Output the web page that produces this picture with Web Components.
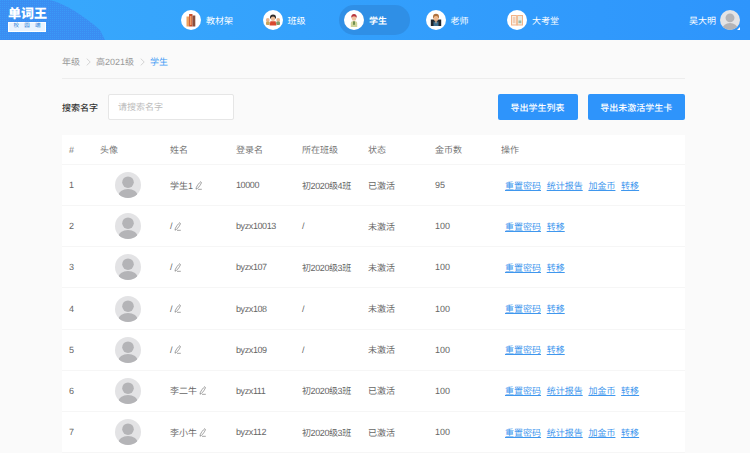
<!DOCTYPE html>
<html lang="zh">
<head>
<meta charset="utf-8">
<title>学生</title>
<style>
    html, body { margin: 0; padding: 0; }
    body {
        width: 750px;
        height: 453px;
        overflow: hidden;
        background: #fafafa;
        font-family: "Liberation Sans", "Noto Sans CJK SC", sans-serif;
        text-rendering: geometricPrecision;
    }
</style>
</head>
<body>
<top-bar></top-bar>
<page-main></page-main>

<script>
const AVATAR = `
    <svg viewBox="0 0 26 26" width="26" height="26">
        <defs><clipPath id="c"><circle cx="13" cy="13" r="13"/></clipPath></defs>
        <circle cx="13" cy="13" r="13" fill="#e3e3e5"/>
        <g clip-path="url(#c)" fill="#b4b4b7">
            <circle cx="13" cy="10.2" r="5.8"/>
            <ellipse cx="13" cy="24" rx="9.8" ry="7"/>
        </g>
    </svg>`;

const NAV_ICONS = {
    book: `<svg viewBox="0 0 20 20" width="20" height="20">
        <circle cx="10" cy="10" r="10" fill="#fff"/>
        <rect x="5.5" y="6.5" width="2.6" height="10" fill="#eda15f"/>
        <rect x="8.1" y="4" width="3.4" height="12.5" fill="#c9502d"/>
        <rect x="11.5" y="5.5" width="2.8" height="11" fill="#8a4f3c"/>
        <rect x="9.2" y="6" width="1.2" height="9" fill="#f3b27a"/>
    </svg>`,
    cls: `<svg viewBox="0 0 20 20" width="20" height="20">
        <circle cx="10" cy="10" r="10" fill="#fff"/>
        <circle cx="4.8" cy="10" r="1.9" fill="#e9b48c"/><rect x="3" y="11.5" width="3.8" height="3.5" rx="1" fill="#c9a45c"/>
        <circle cx="15.2" cy="10" r="1.9" fill="#e9b48c"/><rect x="13.2" y="11.5" width="3.8" height="3.5" rx="1" fill="#7f9a6a"/>
        <path d="M7 7.5a3 3 0 0 1 6 0v1H7z" fill="#2f2b2a"/>
        <circle cx="10" cy="8.7" r="2.2" fill="#f0bf9a"/>
        <path d="M6.6 15.5 7.4 11.2h5.2l.8 4.3z" fill="#d9482f"/>
    </svg>`,
    student: `<svg viewBox="0 0 20 20" width="20" height="20">
        <circle cx="10" cy="10" r="10" fill="#fff"/>
        <path d="M7.2 7.5a2.8 3.6 0 0 1 5.6 0z" fill="#b8373d"/>
        <circle cx="10" cy="8.5" r="2.3" fill="#f0c3a0"/>
        <path d="M6.8 17V13q0-1.7 1.7-1.7h3q1.700 0 1.700 1.700v4z" fill="#cfd49a"/>
        <rect x="9" y="11.3" width="2" height="3.5" fill="#6f8f50"/>
    </svg>`,
    teacher: `<svg viewBox="0 0 20 20" width="20" height="20">
        <circle cx="10" cy="10" r="10" fill="#fff"/>
        <rect x="4.8" y="9.5" width="10.4" height="6.5" fill="#20262c"/>
        <path d="M7 6.8a3 3 0 0 1 6 0v1.5H7z" fill="#b0703c"/>
        <circle cx="10" cy="8.4" r="2.5" fill="#eeb98f"/>
        <path d="M7.5 16V11.6h5V16z" fill="#3f6f8f"/>
        <path d="M9 11.3h2l-1 2.4z" fill="#eeb98f"/>
    </svg>`,
    exam: `<svg viewBox="0 0 20 20" width="20" height="20">
        <circle cx="10" cy="10" r="10" fill="#fff"/>
        <path d="M4 5h5.500l.5.6.5-.6H16v10.500h-5.500l-.5.6-.5-.6H4z" fill="#f2b48a"/>
        <rect x="5" y="6" width="4.200" height="8.500" fill="#fbeee2"/>
        <rect x="10.800" y="6" width="4.200" height="8.500" fill="#ecebe0"/>
        <path d="M5.800 8h2.600M5.800 10h2.600M5.800 12h2.600" stroke="#e39a6c" stroke-width=".7"/>
        <rect x="11.500" y="10.500" width="2.800" height="2.600" fill="#9fb8a0"/>
    </svg>`
};

class TopBar extends HTMLElement {
    constructor() {
        super();
        const items = [
            ["book", "教材架"], ["cls", "班级"], ["student", "学生", true],
            ["teacher", "老师"], ["exam", "大考堂"]
        ];
        this.attachShadow({mode: "open"}).innerHTML = `
        <style>
            :host {
                display: flex;
                align-items: center;
                height: 40px;
                position: relative;
                overflow: hidden;
                color: #fff;
                background: linear-gradient(90deg, #38a9fc, #2e95fc);
            }
            .blob { position: absolute; left: 0; top: 0; }
            .logo {
                position: absolute;
                left: 8px;
                top: 7px;
                width: 38px;
                line-height: 1;
                text-align: center;
            }
            .big {
                display: block;
                font-size: 13px;
                font-weight: 900;
                height: 14px;
                white-space: nowrap;
            }
            .small {
                display: flex;
                justify-content: space-around;
                align-items: center;
                height: 8px;
                margin-top: 1px;
                background: #e9f4ff;
                border: 0.5px solid #fff;
                color: #2680d8;
                font-size: 5.5px;
                padding: 0 2px;
            }
            nav {
                display: flex;
                align-items: center;
                margin-left: 181px;
            }
            .item {
                display: flex;
                align-items: center;
                gap: 5px;
                box-sizing: border-box;
                width: 81.5px;
                height: 30px;
                border-radius: 15px;
                font-size: 9px;
                white-space: nowrap;
            }
            .item svg { display: block; }
            .on {
                background: #2f8fe6;
                width: 71px;
                padding-left: 5px;
                margin: 0 15.5px 0 -5px;
                font-weight: 700;
            }
            .user {
                margin-left: auto;
                margin-right: 10px;
                display: flex;
                align-items: center;
                gap: 4px;
                font-size: 9px;
                position: relative;
            }
            .user .av { width: 20px; height: 20px; display: block; }
            .user .av svg { width: 20px; height: 20px; display: block; }
            .caret {
                position: absolute;
                right: 0;
                bottom: 0;
                width: 0;
                height: 0;
                border-left: 3px solid transparent;
                border-bottom: 3px solid #fff;
            }
        </style>
        <svg class="blob" width="106" height="40" viewBox="0 0 106 40">
            <defs>
                <pattern id="dots" width="2" height="2" patternUnits="userSpaceOnUse">
                    <rect width="2" height="2" fill="#3b8df2"/>
                    <rect width="1" height="1" fill="#3a9af7"/>
                </pattern>
            </defs>
            <path d="M0 0H50C66 4 84 16 100 30L105 40H0Z" fill="url(#dots)"/>
        </svg>
        <div class="logo">
            <span class="big">单词王</span>
            <span class="small"><span>校</span><span>园</span><span>端</span></span>
        </div>
        <nav>
            ${items.map(([ic, label, on]) => `<div class="item ${on ? "on" : ""}">${NAV_ICONS[ic]}<span>${label}</span></div>`).join("")}
        </nav>
        <div class="user">
            <span>吴大明</span>
            <span class="av">${AVATAR}</span>
            <span class="caret"></span>
        </div>`;
    }
}

class BreadCrumb extends HTMLElement {
    constructor() {
        super();
        const chev = `<svg width="5" height="8" viewBox="0 0 5 8"><path d="M.7.6 4.2 4 .7 7.4" fill="none" stroke="#c4c4c4" stroke-width=".7"/></svg>`;
        this.attachShadow({mode: "open"}).innerHTML = `
        <style>
            :host {
                display: flex;
                align-items: center;
                gap: 5.5px;
                box-sizing: border-box;
                height: 39px;
                padding-top: 5px;
                border-bottom: 1px solid #ededed;
                font-size: 9px;
                color: #999;
            }
            .now { color: #3f9bf5; }
        </style>
        <span>年级</span>${chev}<span>高2021级</span>${chev}<span class="now">学生</span>`;
    }
}

class SearchBar extends HTMLElement {
    constructor() {
        super();
        this.attachShadow({mode: "open"}).innerHTML = `
        <style>
            :host {
                display: flex;
                align-items: center;
                height: 26px;
                margin-top: 15px;
                font-size: 9px;
            }
            label { color: #333; margin-right: 10px; font-weight: 500; width: 36px; white-space: nowrap; }
            .input {
                width: 115px;
                height: 24px;
                line-height: 24px;
                padding-left: 9px;
                background: #fff;
                border: 1px solid #e6e6e6;
                border-radius: 2px;
                color: #bbb;
            }
            .btns { margin-left: auto; display: flex; gap: 10px; }
            button {
                height: 26px;
                border: 0;
                border-radius: 2px;
                background: #2e94fb;
                color: #fff;
                font: 500 9px "Liberation Sans", "Noto Sans CJK SC", sans-serif;
                text-rendering: geometricPrecision;
                padding: 0;
            }
        </style>
        <label>搜索名字</label>
        <div class="input">请搜索名字</div>
        <div class="btns">
            <button style="width:80px">导出学生列表</button>
            <button style="width:97.5px">导出未激活学生卡</button>
        </div>`;
    }
}

class StudentTable extends HTMLElement {
    constructor() {
        super();
        const rows = [
            [1, "学生1", "10000", "初2020级4班", "已激活", 95, true],
            [2, "/", "byzx10013", "/", "未激活", 100, false],
            [3, "/", "byzx107", "初2020级3班", "未激活", 100, false],
            [4, "/", "byzx108", "/", "未激活", 100, false],
            [5, "/", "byzx109", "/", "未激活", 100, false],
            [6, "李二牛", "byzx111", "初2020级3班", "已激活", 100, true],
            [7, "李小牛", "byzx112", "初2020级3班", "已激活", 100, true]
        ];
        const pen = `<svg class="pen" width="7" height="9" viewBox="0 0 7 9"><path d="M5.5.9C4 2 2.2 4.500 1.300 6.500L1 8.200l1.500-.8C4 6 5.800 3.500 6.300 2 6.600 1.100 6 .5 5.500.9zM3 8.300H6.800" fill="none" stroke="#666" stroke-width=".6"/></svg>`;
        const row = r => `
            <div class="row">
                <span>${r[0]}</span>
                <span class="av">${AVATAR}</span>
                <span class="nm">${r[1]} ${pen}</span>
                <span class="tight">${r[2]}</span>
                <span class="tight">${r[3]}</span>
                <span>${r[4]}</span>
                <span>${r[5]}</span>
                <span class="ops">
                    <a>重置密码</a>
                    ${r[6] ? "<a>统计报告</a><a>加金币</a>" : ""}
                    <a>转移</a>
                </span>
            </div>`;
        this.attachShadow({mode: "open"}).innerHTML = `
        <style>
            :host {
                display: block;
                margin-top: 15px;
                background: #fff;
                font-size: 9px;
                color: #666;
            }
            .row {
                display: grid;
                grid-template-columns: 31px 70px 66px 66px 66px 67px 66px 1fr;
                align-items: center;
                height: 40.17px;
                padding-left: 7px;
                border-bottom: 1px solid #f6f6f6;
                white-space: nowrap;
            }
            .head { height: 29px; color: #777; }
            .av { display: flex; padding-left: 15px; }
            .av svg { display: block; }
            .nm { display: flex; align-items: center; gap: 1.5px; }
            .pen { display: block; }
            .tight { letter-spacing: -0.4px; }
            .ops { display: flex; gap: 5.7px; padding-left: 4px; }
            a { color: #3f97ee; text-decoration: underline; }
        </style>
        <div class="row head">
            <span>#</span><span>头像</span><span>姓名</span><span>登录名</span>
            <span>所在班级</span><span>状态</span><span>金币数</span><span>操作</span>
        </div>
        ${rows.map(row).join("")}`;
    }
}

class PageMain extends HTMLElement {
    constructor() {
        super();
        this.attachShadow({mode: "open"}).innerHTML = `
        <style>
            :host { display: block; padding: 0 65px 0 62px; }
        </style>
        <bread-crumb></bread-crumb>
        <search-bar></search-bar>
        <student-table></student-table>`;
    }
}

customElements.define("top-bar", TopBar);
customElements.define("bread-crumb", BreadCrumb);
customElements.define("search-bar", SearchBar);
customElements.define("student-table", StudentTable);
customElements.define("page-main", PageMain);
</script>
</body>
</html>
